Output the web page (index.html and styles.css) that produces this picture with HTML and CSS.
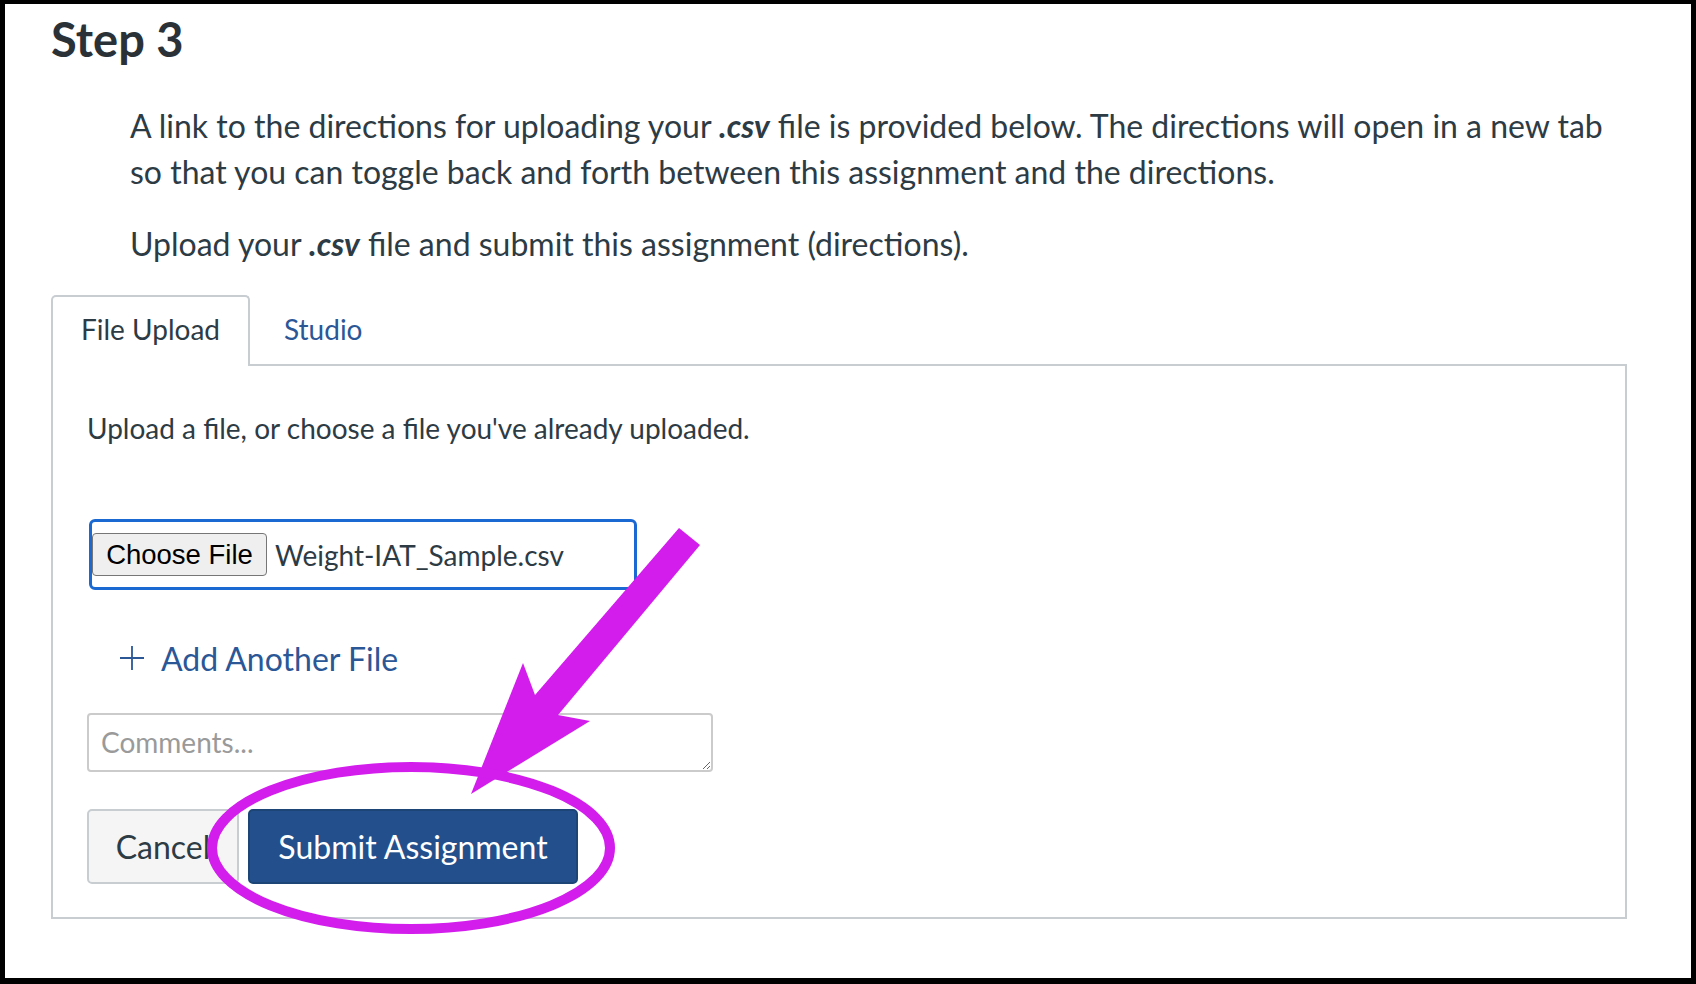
FILE: index.html
```html
<!DOCTYPE html>
<html lang="en">
<head>
<meta charset="utf-8">
<title>Step 3</title>
<link rel="stylesheet" href="styles.css">
</head>
<body>
<div class="frame">
  <h2 class="title">Step 3</h2>
  <div class="intro">
    <p>A link to the directions for uploading your <strong><em>.csv</em></strong> file is provided below. The directions will open in a new tab so that you can toggle back and forth between this assignment and the directions.</p>
    <p>Upload your <strong><em>.csv</em></strong> file and submit this assignment (directions).</p>
  </div>
  <div class="tabs">
    <div class="tab-list">
      <div class="tab active">File Upload</div>
      <div class="tab link">Studio</div>
    </div>
    <div class="panel">
      <p class="hint">Upload a file, or choose a file you've already uploaded.</p>
      <div class="file-input">
        <span class="choose">Choose File</span>
        <span class="fname">Weight-IAT_Sample.csv</span>
      </div>
      <div class="add-file">
        <svg class="plus" width="26" height="26" viewBox="0 0 26 26"><path d="M13 1V25M1 13H25" stroke="#2b5797" stroke-width="1.8" fill="none"/></svg>
        <span>Add Another File</span>
      </div>
      <textarea class="comments" placeholder="Comments..."></textarea>
      <div class="actions">
        <button class="btn cancel">Cancel</button>
        <button class="btn submit">Submit Assignment</button>
      </div>
    </div>
  </div>
</div>
<svg class="annot" width="1696" height="984" viewBox="0 0 1696 984">
  <polygon points="679,528 700,545 558,715 590,721 471,794 523,663 535,695" fill="#d21ded"/>
  <ellipse cx="411" cy="848" rx="199" ry="81" fill="none" stroke="#d21ded" stroke-width="10"/>
</svg>
</body>
</html>
```

FILE: styles.css
```css
html, body {
  margin: 0;
  padding: 0;
}
body {
  background: #000;
  font-family: Lato, "Open Sans", sans-serif;
  color: #2d3b45;
}
.frame {
  margin: 4px 5px 0 5px;
  height: 974px;
  background: #fff;
  box-sizing: border-box;
  padding: 8px 0 0 46px;
}
.title {
  margin: 0;
  font-size: 47px;
  line-height: 54px;
  font-weight: 700;
  color: #2a3238;
}
.intro {
  margin: 37px 0 0 79px;
  width: 1490px;
  font-size: 32px;
  line-height: 46px;
}
.intro p {
  margin: 0 0 26px 0;
}
.intro p:last-child {
  margin-bottom: 0;
}
.tabs {
  margin-top: 28px;
  width: 1576px;
}
.tab-list {
  display: flex;
}
.tab {
  font-size: 28px;
  line-height: 34px;
  padding: 15px 28px 20px 28px;
  border: 2px solid transparent;
  border-bottom: 0;
  margin-bottom: -2px;
  border-radius: 5px 5px 0 0;
}
.tab.active {
  background: #fff;
  border-color: #c7cdd1;
  position: relative;
  z-index: 1;
}
.tab.link {
  color: #2b5797;
  padding-left: 32px;
}
.panel {
  border: 2px solid #c7cdd1;
  padding: 45px 34px 33px 34px;
}
.hint {
  margin: 0;
  font-size: 28px;
  line-height: 34px;
}
.file-input {
  margin: 74px 0 0 2px;
  width: 548px;
  height: 71px;
  box-sizing: border-box;
  border: 3px solid #1a68d1;
  border-radius: 6px;
  display: flex;
  align-items: center;
  gap: 8px;
}
.choose {
  font-family: "Liberation Sans", Arial, sans-serif;
  font-size: 27.5px;
  color: #000;
  background: #efefef;
  border: 1px solid #767676;
  border-radius: 4px;
  height: 43px;
  width: 175px;
  box-sizing: border-box;
  display: flex;
  align-items: center;
  justify-content: center;
}
.fname {
  font-size: 28px;
  color: #2d3b45;
}
.add-file {
  margin: 48px 0 0 32px;
  height: 40px;
  display: flex;
  align-items: center;
  gap: 16px;
  font-size: 32px;
  color: #2b5797;
}
.comments {
  display: block;
  margin: 35px 0 0 0;
  width: 626px;
  height: 59px;
  box-sizing: border-box;
  border: 2px solid #cbcbcb;
  border-radius: 4px;
  padding: 10px 12px;
  font-family: Lato, sans-serif;
  font-size: 28px;
  line-height: 34px;
  color: #2d3b45;
  resize: both;
}
.comments::placeholder {
  color: #9a9a9a;
}
.actions {
  margin-top: 37px;
  display: flex;
  gap: 9px;
}
.btn {
  font-family: Lato, sans-serif;
  font-size: 32px;
  height: 75px;
  box-sizing: border-box;
  border-radius: 5px;
  padding: 0;
}
.cancel {
  width: 152px;
  background: #f5f5f5;
  border: 2px solid #c7cdd1;
  color: #2d3b45;
}
.submit {
  width: 330px;
  background: #23508c;
  border: 2px solid #1d4677;
  color: #fff;
}
.annot {
  position: absolute;
  left: 0;
  top: 0;
  pointer-events: none;
}
```
